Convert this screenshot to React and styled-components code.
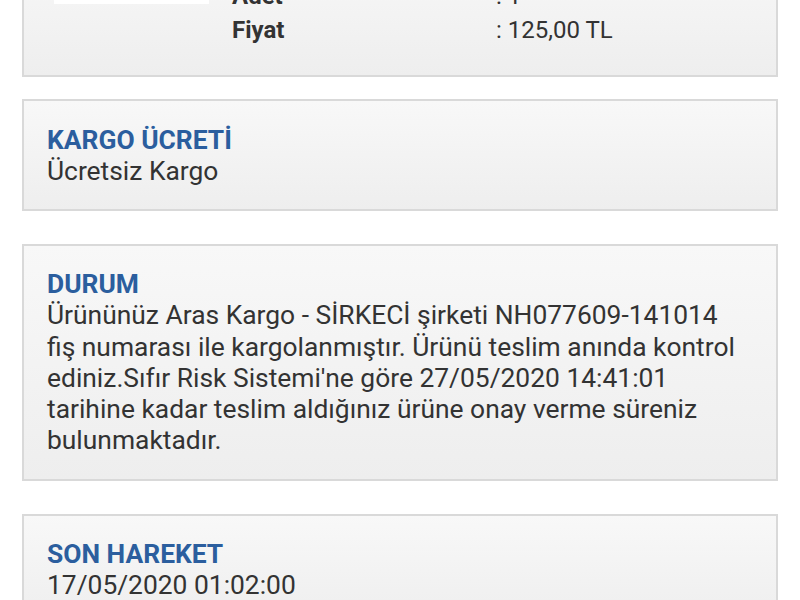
import React from "react";
import styled, { createGlobalStyle } from "styled-components";

const GlobalStyle = createGlobalStyle`
  html, body { margin: 0; padding: 0; background: #ffffff; }
  body { font-family: Roboto, "Noto Sans", "Liberation Sans", sans-serif; overflow: hidden; }
`;

const Page = styled.div`
  width: 800px;
  height: 600px;
  overflow: hidden;
  background: #ffffff;
`;

const List = styled.div`
  display: flex;
  flex-direction: column;
  padding: 0 22px;
  margin-top: -47px;
`;

const Card = styled.section`
  border: 2px solid #d9d9d9;
  background: linear-gradient(#f8f8f8, #eeeeee);
  padding: ${(p) => p.$pad || "23px 24px 22px 23px"};
  margin-bottom: ${(p) => p.$gap || 33}px;
`;

const ProductRow = styled.div`
  display: flex;
  align-items: flex-start;
`;

const Thumb = styled.div`
  width: 155px;
  height: 25px;
  background: #ffffff;
  margin-left: 4px;
  flex: none;
`;

const Details = styled.div`
  display: grid;
  grid-template-columns: 264px auto;
  margin-left: 23px;
  font-size: 24px;
  line-height: 34px;
  color: #333333;
`;

const Label = styled.div`
  font-weight: 700;
`;

const Value = styled.div`
  font-weight: 400;
`;

const Title = styled.h2`
  margin: 0;
  font-size: 26.4px;
  line-height: 31px;
  font-weight: 700;
  color: #2b5e9e;
`;

const Body = styled.p`
  margin: 0;
  font-size: 26.4px;
  line-height: 31.25px;
  color: #333333;
`;

export default function App() {
  return (
    <Page>
      <GlobalStyle />
      <List>
        <Card $pad="24px 22px 28px 26px" $gap={22}>
          <ProductRow>
            <Thumb />
            <Details>
              <Label>Adet</Label>
              <Value>: 1</Value>
              <Label>Fiyat</Label>
              <Value>: 125,00 TL</Value>
            </Details>
          </ProductRow>
        </Card>
        <Card $pad="24px 24px 22px 23px">
          <Title>KARGO ÜCRETİ</Title>
          <Body>Ücretsiz Kargo</Body>
        </Card>
        <Card>
          <Title>DURUM</Title>
          <Body>
            Ürününüz Aras Kargo - SİRKECİ şirketi NH077609-141014 fiş numarası ile
            kargolanmıştır. Ürünü teslim anında kontrol ediniz.Sıfır Risk Sistemi'ne
            göre 27/05/2020 14:41:01 tarihine kadar teslim aldığınız ürüne onay verme
            süreniz bulunmaktadır.
          </Body>
        </Card>
        <Card>
          <Title>SON HAREKET</Title>
          <Body>17/05/2020 01:02:00</Body>
        </Card>
      </List>
    </Page>
  );
}
